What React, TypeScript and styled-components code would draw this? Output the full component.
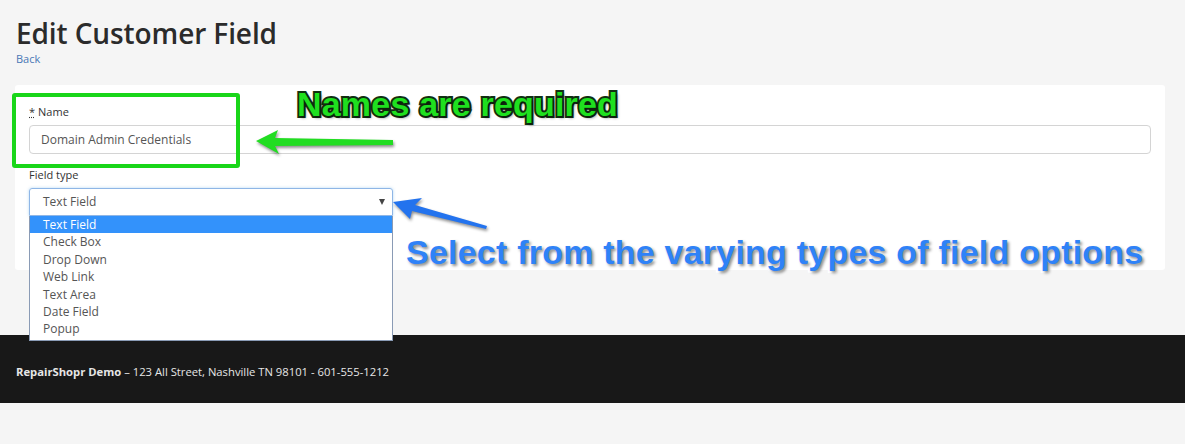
import React from "react";
import styled, { createGlobalStyle } from "styled-components";

const Global = createGlobalStyle`
  html, body { margin: 0; padding: 0; background: #f5f5f5; }
  body { font-family: "Open Sans", "Liberation Sans", sans-serif; color: #333; }
  * { box-sizing: border-box; }
`;

const Page = styled.div`
  position: relative;
  width: 1185px;
  height: 444px;
  overflow: hidden;
  background: #f5f5f5;
  display: flex;
  flex-direction: column;
`;

const Header = styled.div`
  padding: 14px 16px 0 16px;
  height: 85px;
`;

const Title = styled.h1`
  margin: 0;
  font-size: 28px;
  font-weight: 600;
  line-height: 38px;
  color: #2b2b2b;
  letter-spacing: -0.1px;
`;

const BackLink = styled.a`
  display: block;
  font-size: 11px;
  line-height: 14px;
  color: #4a78b5;
  text-decoration: none;
`;

const Card = styled.div`
  position: relative;
  margin-left: 15px;
  width: 1150px;
  height: 185px;
  background: #fff;
  border-radius: 3px;
  padding: 19px 14px 0 14px;
`;

const Label = styled.div`
  font-size: 11px;
  line-height: 16px;
  color: #333;
  margin-bottom: 5px;
`;

const Req = styled.abbr`
  text-decoration: underline dotted;
  margin-right: 3px;
`;

const TextInput = styled.div`
  width: 1122px;
  height: 29px;
  border: 1px solid #d4d4d4;
  border-radius: 4px;
  padding-left: 11px;
  font-size: 12px;
  line-height: 27px;
  color: #555;
  margin-bottom: 13px;
`;

const SelectWrap = styled.div`
  position: relative;
  width: 364px;
`;

const SelectBox = styled.div`
  height: 28px;
  border: 1px solid #8fb6e6;
  border-radius: 3px 3px 0 0;
  box-shadow: 0 0 3px rgba(102, 175, 233, 0.5);
  padding-left: 13px;
  font-size: 12px;
  line-height: 28px;
  color: #555;
  display: flex;
  justify-content: space-between;
  align-items: center;
`;

const Caret = styled.span`
  width: 0;
  height: 0;
  border-left: 3px solid transparent;
  border-right: 3px solid transparent;
  border-top: 6px solid #444;
  margin-right: 7px;
`;

const OptionList = styled.div`
  position: absolute;
  left: 0;
  top: 28px;
  width: 364px;
  background: #fff;
  border: 1px solid #8a9bb5;
  border-top: none;
  z-index: 5;
  padding-bottom: 2px;
`;

const Option = styled.div<{ $active?: boolean }>`
  height: 17.4px;
  line-height: 17px;
  padding-left: 13px;
  font-size: 12px;
  color: ${(p) => (p.$active ? "#fff" : "#555")};
  background: ${(p) => (p.$active ? "#3392fb" : "transparent")};
`;

const Spacer = styled.div`
  height: 65px;
`;

const Footer = styled.footer`
  height: 68px;
  background: #181818;
  padding-left: 16px;
  display: flex;
  align-items: center;
  font-size: 11.25px;
  color: #e6e6e6;
  padding-top: 5px;
`;

const Strong = styled.strong`
  font-weight: 700;
`;

const GreenBox = styled.div`
  position: absolute;
  left: 12px;
  top: 93px;
  width: 228px;
  height: 75px;
  border: 4px solid #19d619;
  border-radius: 3px;
  pointer-events: none;
  z-index: 6;
`;

const Callout = styled.div<{ $color: string; $stroke: string; $left: number; $top: number; $size: number; $spacing: number }>`
  position: absolute;
  left: ${(p) => p.$left}px;
  top: ${(p) => p.$top}px;
  font-family: "Liberation Sans", Arial, sans-serif;
  font-weight: 700;
  font-size: ${(p) => p.$size}px;
  line-height: 1;
  color: ${(p) => p.$color};
  -webkit-text-stroke: 4px ${(p) => p.$stroke};
  paint-order: stroke fill;
  text-shadow: 2px 2px 3px rgba(0, 0, 0, 0.45);
  white-space: nowrap;
  letter-spacing: ${(p) => p.$spacing}px;
  z-index: 7;
`;

const Arrow = styled.svg<{ $left: number; $top: number }>`
  position: absolute;
  left: ${(p) => p.$left}px;
  top: ${(p) => p.$top}px;
  overflow: visible;
  z-index: 7;
  filter: drop-shadow(1px 2px 1.5px rgba(0, 0, 0, 0.45));
`;

const options = ["Text Field", "Check Box", "Drop Down", "Web Link", "Text Area", "Date Field", "Popup"];

export default function App() {
  return (
    <>
      <Global />
      <Page>
        <Header>
          <Title>Edit Customer Field</Title>
          <BackLink href="#">Back</BackLink>
        </Header>
        <Card>
          <Label>
            <Req title="required">*</Req>Name
          </Label>
          <TextInput>Domain Admin Credentials</TextInput>
          <Label>Field type</Label>
          <SelectWrap>
            <SelectBox>
              Text Field
              <Caret />
            </SelectBox>
            <OptionList>
              {options.map((o, i) => (
                <Option key={o} $active={i === 0}>
                  {o}
                </Option>
              ))}
            </OptionList>
          </SelectWrap>
        </Card>
        <Spacer />
        <Footer>
          <span>
            <Strong>RepairShopr Demo</Strong> – 123 All Street, Nashville TN 98101 - 601-555-1212
          </span>
        </Footer>

        <GreenBox />
        <Callout $color="#1fe01f" $stroke="#123012" $left={297} $top={87} $size={34} $spacing={0.2}>
          Names are required
        </Callout>
        <Arrow $left={250} $top={125} width="150" height="35" viewBox="0 0 150 35">
          <path d="M6 16 L28 5 L25 13 L143 15 L143 20 L25 21 L29 29 Z" fill="#22dd22" />
        </Arrow>
        <Callout $color="#2f82f7" $stroke="#ffffff" $left={406} $top={235} $size={34} $spacing={0.22}>
          Select from the varying types of field options
        </Callout>
        <Arrow $left={390} $top={195} width="105" height="40" viewBox="0 0 105 40">
          <path d="M3 7 L32 3 L25 10 L97 31 L96 34 L22 16 L20 24 Z" fill="#2373ee" />
        </Arrow>
      </Page>
    </>
  );
}
